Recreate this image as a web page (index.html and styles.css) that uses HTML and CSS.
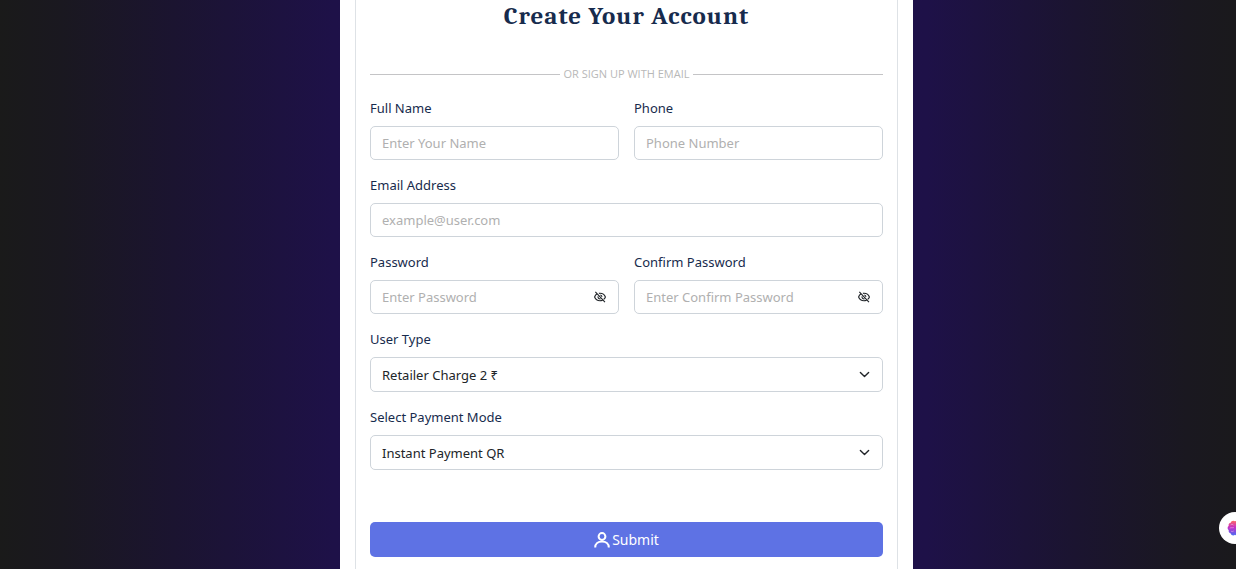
FILE: index.html
```html
<!DOCTYPE html>
<html lang="en">
<head>
  <meta charset="UTF-8">
  <meta name="viewport" content="width=device-width, initial-scale=1.0">
  <title>Create Your Account</title>
  <link rel="stylesheet" href="styles.css">
</head>
<body>
  <main class="signup">
    <form class="card">
      <h1>Create Your Account</h1>
      <div class="divider"><span>OR SIGN UP WITH EMAIL</span></div>

      <div class="row">
        <div class="field">
          <label for="name">Full Name</label>
          <input type="text" id="name" placeholder="Enter Your Name">
        </div>
        <div class="field">
          <label for="phone">Phone</label>
          <input type="tel" id="phone" placeholder="Phone Number">
        </div>
      </div>

      <div class="field">
        <label for="email">Email Address</label>
        <input type="email" id="email" placeholder="example@user.com">
      </div>

      <div class="row">
        <div class="field">
          <label for="password">Password</label>
          <div class="control">
            <input type="password" id="password" placeholder="Enter Password">
            <button type="button" class="toggle" aria-label="Show password">
              <svg viewBox="0 0 16 16"><path d="M4.200 3.800C2.400 4.900 1.200 6.600.8 8c1 2.700 3.700 5 7.200 5 1.200 0 2.300-.3 3.300-.7M6.500 3.200C7 3.100 7.500 3 8 3c3.500 0 6.200 2.300 7.200 5-.4 1.100-1.200 2.300-2.300 3.200M5.400 7.200c-.4 2 1.200 3.600 3.200 3.300M8.200 5.400c1.400.1 2.300 1.100 2.400 2.400M1.800 1.300l12.800 13.400"/></svg>
            </button>
          </div>
        </div>
        <div class="field">
          <label for="confirm">Confirm Password</label>
          <div class="control">
            <input type="password" id="confirm" placeholder="Enter Confirm Password">
            <button type="button" class="toggle" aria-label="Show confirm password">
              <svg viewBox="0 0 16 16"><path d="M4.200 3.800C2.400 4.900 1.200 6.600.8 8c1 2.700 3.700 5 7.200 5 1.200 0 2.300-.3 3.300-.7M6.500 3.200C7 3.100 7.500 3 8 3c3.500 0 6.200 2.300 7.200 5-.4 1.100-1.200 2.300-2.300 3.200M5.400 7.200c-.4 2 1.200 3.600 3.200 3.300M8.200 5.400c1.400.1 2.300 1.100 2.400 2.400M1.800 1.300l12.800 13.400"/></svg>
            </button>
          </div>
        </div>
      </div>

      <div class="field">
        <label for="usertype">User Type</label>
        <div class="control">
          <select id="usertype">
            <option selected>Retailer Charge 2 ₹</option>
          </select>
          <svg class="arrow" viewBox="0 0 16 16"><path d="m2 5 6 6 6-6"/></svg>
        </div>
      </div>

      <div class="field">
        <label for="payment">Select Payment Mode</label>
        <div class="control">
          <select id="payment">
            <option selected>Instant Payment QR</option>
          </select>
          <svg class="arrow" viewBox="0 0 16 16"><path d="m2 5 6 6 6-6"/></svg>
        </div>
      </div>

      <button type="submit" class="submit">
        <svg viewBox="0 0 16 16"><circle cx="8" cy="4.500" r="3.400"/><path d="M1.200 15.500c0-3.800 3-6 6.800-6s6.800 2.200 6.800 6"/></svg>
        Submit
      </button>
    </form>
  </main>

  <button type="button" class="assistant" aria-label="Assistant">
    <svg viewBox="0 0 18 18">
      <defs>
        <linearGradient id="brain" x1="0" y1="0" x2="0" y2="1">
          <stop offset="0" stop-color="#ff6a62"/>
          <stop offset=".45" stop-color="#c42fc4"/>
          <stop offset="1" stop-color="#4b6cf5"/>
        </linearGradient>
      </defs>
      <path fill="url(#brain)" d="M9 1.500C7.500 0 4.500.8 4.200 3 2.300 3.200 1.300 5 2 6.600.2 7.800.2 10.200 2 11.400c-.6 1.800.4 3.500 2.200 3.700.4 2.200 3.300 3 4.800 1.400 1.500 1.600 4.400.8 4.800-1.400 1.800-.2 2.800-1.900 2.200-3.700 1.800-1.200 1.800-3.600 0-4.800.7-1.600-.3-3.400-2.200-3.600C13.500.8 10.500 0 9 1.500z"/>
      <path fill="none" stroke="#f3b5f0" stroke-width=".6" d="M4.200 5.500c1.300-1 2.800-.5 3.200.5M3 9.200c2-1.200 3.500 0 4.800-.7M4.500 12.500c1 .8 2.500.6 3.200-.4M13.800 5.500c-1.300-1-2.800-.5-3.200.5"/>
    </svg>
  </button>
</body>
</html>
```
FILE: styles.css
```css
* {
  margin: 0;
  padding: 0;
  box-sizing: border-box;
}
body {
  min-height: 100vh;
  display: grid;
  grid-template-columns: 340fr 573fr 323fr;
  font-family: 'Noto Sans', 'Open Sans', sans-serif;
  font-size: 13px;
  color: #212529;
  background: linear-gradient(90deg, #1a1a1a 0%, #1a1820 5%, #1b1430 14%, #1e1148 27%, #1f0f4d 50%, #1e1148 75%, #1b1430 87%, #1a1820 96%, #1a191c 100%);
}
.signup {
  grid-column: 2;
  background-color: #fff;
  padding: 0 15px;
}
.card {
  min-height: 100%;
  border: solid #dee2e6;
  border-width: 0 1px;
  padding: 0 14px 12px;
}
h1 {
  font-family: Cambria, 'Liberation Serif', serif;
  font-size: 25px;
  line-height: 32px;
  letter-spacing: 1px;
  text-align: center;
  color: #172b4d;
}
.divider {
  display: flex;
  align-items: center;
  gap: 4px;
  margin: 33px 0 15px;
  font-family: 'Open Sans', sans-serif;
  font-size: 11px;
  line-height: 18px;
  color: #b8b8b8;
}
.divider::before,
.divider::after {
  content: '';
  flex: 1;
  height: 1px;
  background-color: #c4c4c6;
}
.row {
  display: grid;
  grid-template-columns: 1fr 1fr;
  gap: 15px;
}
.field {
  margin-bottom: 15px;
}
label {
  display: block;
  line-height: 20px;
  margin-bottom: 8px;
  color: #172b4d;
}
input,
select {
  display: block;
  width: 100%;
  height: 34px;
  padding: 0 11px;
  border: 1px solid #ced4da;
  border-radius: 5px;
  background-color: #fff;
  font: inherit;
  color: #212529;
}
select {
  height: 35px;
  appearance: none;
}
input::placeholder {
  color: #b0b0b0;
}
.control {
  position: relative;
}
.toggle {
  position: absolute;
  top: 11px;
  right: 13px;
  width: 12px;
  height: 12px;
  border: 0;
  background: none;
  cursor: pointer;
}
.toggle svg,
.arrow {
  display: block;
  fill: none;
  stroke: #212529;
  stroke-width: 1.5;
}
.arrow {
  position: absolute;
  top: 12px;
  right: 13px;
  width: 11px;
  height: 11px;
  stroke-width: 2;
  stroke-linecap: round;
  stroke-linejoin: round;
  pointer-events: none;
}
.submit {
  display: flex;
  align-items: center;
  justify-content: center;
  gap: 2px;
  width: 100%;
  height: 35px;
  margin-top: 52px;
  border: 0;
  border-radius: 5px;
  background-color: #5e72e4;
  font: inherit;
  font-size: 14px;
  color: #fff;
  cursor: pointer;
}
.submit svg {
  width: 16px;
  height: 16px;
  fill: none;
  stroke: #fff;
  stroke-width: 2;
}
.assistant {
  position: fixed;
  right: -15px;
  bottom: 25px;
  width: 32px;
  height: 32px;
  display: grid;
  place-items: center;
  border: 0;
  border-radius: 50%;
  background-color: #fff;
}
.assistant svg {
  width: 16px;
  height: 16px;
}
```
